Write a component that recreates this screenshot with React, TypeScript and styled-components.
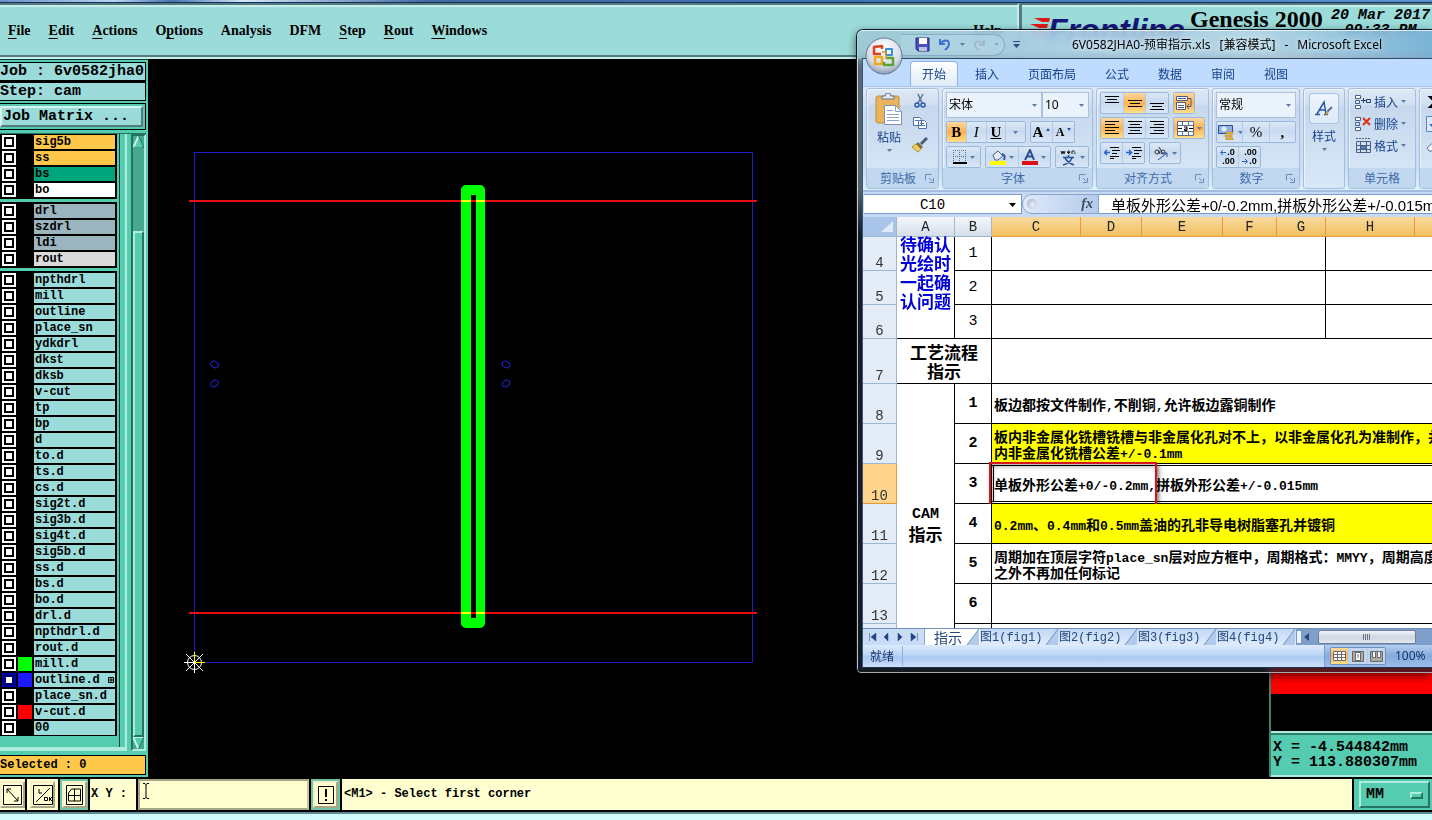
import React from "react";
import styled, { createGlobalStyle, css } from "styled-components";

const mono = '"Liberation Mono", "Noto Sans CJK SC", monospace';
const serif = '"Liberation Serif", "Noto Sans CJK SC", serif';
const ui = '"Noto Sans CJK SC", "Noto Sans", sans-serif';

const teal = "#9bdbda";
const green = "#55cbb0";
const cream = "#ffffcf";

const Global = createGlobalStyle`
  *, *::before, *::after { box-sizing: border-box; }
  html, body { margin: 0; padding: 0; background: #000; }
  body { overflow: hidden; }
  button, input, select { margin: 0; padding: 0; border: 0; border-radius: 0; font: inherit; color: inherit; background: none; outline: none; }
  button { cursor: pointer; }
  svg { display: block; flex: none; }
`;

const Page = styled.div`
  position: relative;
  display: flex;
  flex-direction: column;
  min-height: 100vh;
  overflow: hidden;
  background: #000;
  color: #000;
  font-family: ${mono};
`;

/* ---------- CAM header ---------- */
const DesktopStrip = styled.div`
  height: 3px;
  flex: none;
  background: linear-gradient(90deg, #6d8fc4, #b9d4ef 8%, #4a74ad 12%, #d5e6f7 17%, #44689f 30%, #3f73b3 60%, #5c92cc);
  border-bottom: 1px solid #12305c;
`;
const Header = styled.header`
  display: flex;
  flex: none;
  height: 56px;
  background: ${teal};
`;
const HeaderPanel = styled.div`
  display: flex;
  border-top: 2px solid #547c7e;
  border-bottom: 2px solid #c9efec;
  box-shadow: inset 0 2px #c9efec, inset 0 -2px #547c7e;
`;
const MenuPanel = styled(HeaderPanel)`
  flex: 1;
  align-items: center;
  padding: 0 15px 0 8px;
  border-right: 2px solid #c9efec;
`;
const Menu = styled.nav`
  display: flex;
  flex: 1;
  gap: 18px;
  font: bold 14px/18px ${serif};
`;
const MenuButton = styled.button`
  height: 18px;
  u { text-underline-offset: 3px; }
  &:last-child { margin-left: auto; }
`;
const BrandPanel = styled(HeaderPanel)`
  flex: none;
  width: 413px;
  padding: 0 2px 0 8px;
  border-left: 3px solid #547c7e;
  overflow: hidden;
`;
const Brand = styled.div`
  display: flex;
  width: 160px;
  margin-top: 7px;
  color: #16167c;
  font: italic bold 32px/36px "Liberation Sans", sans-serif;
  svg { margin: 6px -2px 0 0; }
`;
const Product = styled.div`
  width: 141px;
  font: bold 24px/28px ${serif};
  white-space: nowrap;
`;
const Clock = styled.time`
  font: italic bold 15px/15px ${mono};
  white-space: pre;
  text-align: center;
  padding-top: 3px;
`;

/* ---------- Main area ---------- */
const Main = styled.main`
  display: flex;
  flex: 1;
  min-height: 718px;
`;
const Sidebar = styled.aside`
  display: flex;
  flex-direction: column;
  flex: none;
  width: 148px;
  padding: 2px 2px 2px 0;
  background: ${green};
  border-top: 1px solid #0b3b31;
`;
const InfoLine = styled.div<{ $last?: boolean }>`
  height: ${(p) => (p.$last ? 19 : 20)}px;
  background: ${teal};
  border: 1px solid #000;
  border-left: 0;
  border-bottom-width: ${(p) => (p.$last ? 1 : 2)}px;
  font: bold 15px/18px ${mono};
  white-space: pre;
  overflow: hidden;
`;
const MatrixFrame = styled.div`
  margin: 2px 0 3px;
  padding: 2px 2px 2px 0;
  border: 1px solid #000;
  border-left: 0;
`;
const MatrixButton = styled.button`
  display: block;
  width: 100%;
  height: 21px;
  padding-left: 1px;
  border: 2px solid;
  border-color: #d6f5f3 #547c7e #547c7e #d6f5f3;
  background: ${teal};
  font: bold 15px/17px ${mono};
  text-align: left;
  white-space: pre;
`;
const LayerArea = styled.div`
  display: flex;
  flex: 1;
  border-top: 1px solid #23735f;
`;
const LayerPane = styled.div`
  width: 127px;
  padding: 0 7px 10px 0;
  border-right: 2px solid #aeeddc;
  border-bottom: 4px solid #aeeddc;
  background: linear-gradient(90deg, ${green} 119px, #123f35 119px, #123f35 120px, ${green} 120px);
`;
const LayerGroup = styled.fieldset`
  width: 117px;
  min-width: 0;
  margin: 0;
  padding: 0;
  border: 0;
  background: #000;
  & + & {
    margin-top: 3px;
    border-top: 1px solid #000;
  }
  &:not(:last-child) { border-bottom: 1px solid #000; }
`;
const LayerRow = styled.label`
  display: flex;
  align-items: center;
  gap: 2px;
  height: 16px;
  padding-left: 2px;
`;
const LayerBox = styled.input`
  appearance: none;
  flex: none;
  width: 14px;
  height: 14px;
  background: #fff;
  box-shadow: inset 0 0 0 2px #fff, inset 0 0 0 4px #000;
  &:checked { box-shadow: inset 0 0 0 2px #0000a8, inset 0 0 0 4px #000070; }
`;
const Swatch = styled.span<{ $color?: string }>`
  flex: none;
  width: 14px;
  height: 14px;
  background: ${(p) => p.$color || "#000"};
`;
const LayerName = styled.span<{ $bg: string }>`
  display: flex;
  align-items: center;
  justify-content: space-between;
  width: 81px;
  height: 14px;
  padding: 0 1px;
  background: ${(p) => p.$bg};
  font: bold 12px/14px ${mono};
`;
const ScrollTrack = styled.div`
  display: flex;
  flex-direction: column;
  width: 15px;
  margin: 0 0 0 4px;
  background: #45a98f;
  border: 2px solid;
  border-color: #23735f #aeeddc #aeeddc #23735f;
`;
const ScrollSpace = styled.div`
  height: 83px;
`;
const ScrollThumb = styled.div`
  flex: 1;
  background: ${green};
  border: 2px solid;
  border-color: #aeeddc #23735f #23735f #aeeddc;
`;
const Selected = styled.div`
  height: 20px;
  margin-top: 4px;
  background: #ffc84a;
  border: 1px solid #000;
  border-left: 0;
  font: bold 12px/18px ${mono};
`;
const Canvas = styled.div`
  flex: 1;
  min-width: 0;
  svg { width: 100%; height: 100%; }
`;
const ReadoutColumn = styled.div`
  display: flex;
  flex-direction: column;
  flex: none;
  width: 163px;
  border-left: 2px solid #3d7f70;
`;
const RedFill = styled.div`
  flex: 1;
  background: #f00;
`;
const BlackFill = styled.div`
  height: 37px;
  background: #000;
`;
const Coordinates = styled.div`
  height: 46px;
  padding: 7px 0 0 2px;
  background: ${green};
  border-top: 2px solid #aeeddc;
  border-bottom: 2px solid #aeeddc;
  box-shadow: inset 0 2px #2f7c69;
  font: bold 15px/15px ${mono};
  white-space: pre;
`;

/* ---------- Bottom bar ---------- */
const CommandBar = styled.footer`
  display: flex;
  flex: none;
  gap: 2px;
  height: 35px;
  padding: 2px 0;
  background: #000;
`;
const IconCell = styled.div<{ $active?: boolean; $width: number }>`
  display: flex;
  align-items: center;
  justify-content: center;
  flex: none;
  width: ${(p) => p.$width}px;
  background: ${(p) => (p.$active ? "#6fc3a8" : cream)};
`;
const IconButton = styled.button`
  display: flex;
  align-items: center;
  justify-content: center;
  width: 25px;
  height: 27px;
  background: ${cream};
  border: 2px solid;
  border-color: #f4f0c8 #a8a686 #a8a686 #f4f0c8;
`;
const XYLabel = styled.label`
  flex: none;
  width: 46px;
  padding-left: 1px;
  background: ${cream};
  font: bold 12px/31px ${mono};
  white-space: pre;
`;
const XYWrap = styled.div`
  position: relative;
  flex: none;
  width: 171px;
  svg { position: absolute; left: 5px; top: 4px; }
`;
const XYInput = styled.input`
  display: block;
  width: 171px;
  height: 31px;
  padding: 0 14px;
  background: ${cream};
  border: 2px solid;
  border-color: #a8a686 #c9c7a2 #a8a686 #a8a686;
  font: bold 12px/24px ${mono};
`;
const Message = styled.div`
  flex: 1;
  padding-left: 2px;
  background: ${cream};
  font: bold 12px/31px ${mono};
  white-space: nowrap;
`;
const UnitPanel = styled.div`
  position: relative;
  flex: none;
  width: 78px;
  padding: 2px 2px 2px 5px;
  background: ${green};
`;
const UnitSelect = styled.select`
  appearance: none;
  width: 100%;
  height: 27px;
  padding-left: 5px;
  border: 2px solid;
  border-color: #aeeddc #23735f #23735f #aeeddc;
  font: bold 15px/20px ${mono};
`;
const UnitKnob = styled.span`
  position: absolute;
  right: 9px;
  top: 13px;
  width: 13px;
  height: 7px;
  border: 2px solid;
  border-color: #aeeddc #23735f #23735f #aeeddc;
  pointer-events: none;
`;
const BottomStrip = styled.div`
  flex: none;
  height: 8px;
  background: #cffbfb;
  border-top: 2px solid #5f8a94;
`;

/* ---------- Spreadsheet window ---------- */
const Win = styled.section`
  position: absolute;
  left: 856px;
  right: 0;
  top: 29px;
  padding: 0 0 4px 5px;
  border: 1px solid #0d1a26;
  border-right: 0;
  border-bottom-color: #a9a9ad;
  border-radius: 7px 0 0 5px;
  background: linear-gradient(rgba(190, 205, 220, 0.5), rgba(190, 205, 220, 0.45) 25%, rgba(30, 34, 44, 0.75) 32%);
  box-shadow: inset 1px 1px rgba(235, 246, 255, 0.75), 0 3px 8px rgba(0, 0, 0, 0.6);
  backdrop-filter: blur(5px);
  font-family: ${ui};
  font-size: 12px;
`;
const TitleBar = styled.div`
  display: flex;
  align-items: center;
  height: 28px;
  margin-left: -5px;
  padding-left: 44px;
  border-top: 1px solid rgba(240, 250, 255, 0.8);
  border-top-left-radius: 6px;
  background: linear-gradient(90deg, rgba(150, 198, 208, 0.7), rgba(166, 204, 230, 0.7) 30%, rgba(180, 212, 232, 0.65) 70%, rgba(110, 172, 212, 0.8));
`;
const QuickAccess = styled.div`
  display: flex;
  align-items: center;
  gap: 8px;
  width: 104px;
  height: 22px;
  padding-left: 14px;
  border: 1px solid rgba(110, 150, 185, 0.6);
  border-left: 0;
  border-radius: 0 12px 12px 0;
  background: rgba(200, 226, 240, 0.3);
`;
const TinyButton = styled.button`
  display: flex;
  align-items: center;
  justify-content: center;
  min-width: 5px;
`;
const Title = styled.h1`
  display: flex;
  gap: 9px;
  margin: 0 0 0 52px;
  font: 12px/22px "Noto Sans", "Noto Sans CJK SC", sans-serif;
  white-space: pre;
  text-shadow: 0 0 6px #fff;
`;
const Orb = styled.button`
  position: absolute;
  left: 8px;
  top: 7px;
  width: 38px;
  height: 38px;
`;
const Client = styled.div`
  border-left: 1px solid #34577f;
  border-top: 1px solid #2c4a66;
  border-bottom: 1px solid #1d3450;
  background: #c5dafa;
  overflow: hidden;
`;
const RibbonTabs = styled.div`
  display: flex;
  gap: 5px;
  height: 27px;
  padding: 2px 0 0 47px;
  background: #bfdbff;
`;
const RibbonTab = styled.button<{ $on?: boolean }>`
  height: 25px;
  padding: 0 12px;
  color: #15428b;
  font: 12px/22px ${ui};
  white-space: nowrap;
  ${(p) =>
    p.$on &&
    css`
      background: linear-gradient(#fff, #e0ebf8);
      border: 1px solid #8db2e3;
      border-bottom: 0;
      border-radius: 4px 4px 0 0;
      padding: 0 11px;
    `}
`;
const Ribbon = styled.div`
  display: flex;
  gap: 3px;
  height: 106px;
  padding: 1px 0 1px 3px;
  background: linear-gradient(#dce8f6, #cbdcf0 25%, #c9ddf4 80%, #e1f0ff);
  border-top: 1px solid #a5c5ee;
  border-bottom: 2px solid #a3bde0;
`;
const Group = styled.div<{ $width: number }>`
  display: flex;
  flex-direction: column;
  flex: none;
  width: ${(p) => p.$width}px;
  border: 1px solid #a3bfdd;
  border-radius: 3px;
  background: linear-gradient(#dee8f5, #d1dff0 16%, #c7d8ed 17%, #d9e8f8);
  box-shadow: inset 1px 1px rgba(255, 255, 255, 0.6);
  overflow: hidden;
`;
const GroupBody = styled.div`
  display: flex;
  flex-direction: column;
  flex: 1;
  gap: 3px;
  padding: 3px 3px 0;
`;
const GroupLabel = styled.div`
  display: flex;
  align-items: center;
  justify-content: center;
  flex: none;
  height: 20px;
  padding: 0 4px;
  background: #c2d8f0;
  color: #3e6aaa;
  font: 12px/18px ${ui};
  white-space: nowrap;
  span { flex: 1; text-align: center; }
`;
const Row = styled.div<{ $gap?: number }>`
  display: flex;
  gap: ${(p) => p.$gap ?? 4}px;
`;
const ToolBox = styled.div<{ $width: number }>`
  display: flex;
  flex: none;
  width: ${(p) => p.$width}px;
  height: 22px;
  border: 1px solid #9ab8dc;
  border-radius: 2px;
  background: linear-gradient(#dce8f6, #c8daf0 45%, #d8e6f6);
`;
const Tool = styled.button<{ $on?: boolean }>`
  display: flex;
  align-items: center;
  justify-content: center;
  flex: 1;
  gap: 3px;
  min-width: 0;
  font: 15px/20px ${serif};
  small { font-size: 12px; }
  & + & { border-left: 1px solid #b4cae6; }
  ${(p) => p.$on && css`background: linear-gradient(#fdd9a0, #fdb04f 50%, #ffe08a);`}
`;
const Combo = styled.div<{ $width: number }>`
  position: relative;
  flex: none;
  width: ${(p) => p.$width}px;
  height: 26px;
  border: 1px solid #abc1de;
  background: #eaf2fb;
  svg { position: absolute; right: 4px; top: 11px; pointer-events: none; }
`;
const ComboSelect = styled.select`
  appearance: none;
  width: 100%;
  height: 24px;
  padding-left: 2px;
  font: 12px/22px "Noto Sans", "Noto Sans CJK SC", sans-serif;
`;
const ClipboardBody = styled.div`
  display: flex;
  flex: 1;
  padding: 4px 8px 0;
  gap: 9px;
`;
const BigButton = styled.button`
  display: flex;
  flex-direction: column;
  align-items: center;
  color: #15428b;
  font: 12px/16px ${ui};
  white-space: nowrap;
  gap: 4px;
`;
const SmallColumn = styled.div`
  display: flex;
  flex-direction: column;
  gap: 6px;
`;
const StyleBody = styled.div`
  display: flex;
  flex-direction: column;
  align-items: center;
  padding-top: 4px;
`;
const StyleTile = styled.span`
  display: flex;
  align-items: center;
  justify-content: center;
  width: 30px;
  height: 31px;
  border: 1px solid #a9c3e3;
  border-radius: 3px;
  background: linear-gradient(#eef5fd, #dce9f8);
`;
const CellsButton = styled.button`
  display: flex;
  align-items: center;
  gap: 3px;
  height: 19px;
  padding-left: 3px;
  color: #15428b;
  font: 12px/18px ${ui};
  white-space: nowrap;
`;

const FormulaBar = styled.div`
  display: flex;
  height: 25px;
  padding: 2px 0 1px 1px;
  background: #c8daf2;
`;
const NameBox = styled.div`
  position: relative;
  flex: none;
  width: 158px;
  height: 20px;
  background: #fff;
  border: 1px solid #7a9cc8;
  border-left: 0;
  svg { position: absolute; right: 5px; top: 8px; }
`;
const NameInput = styled.input`
  width: 137px;
  height: 18px;
  text-align: center;
  font: 14px/18px ${mono};
`;
const FxPill = styled.div`
  display: flex;
  align-items: center;
  justify-content: space-between;
  flex: none;
  width: 77px;
  height: 20px;
  padding: 0 5px 0 4px;
  border: 1px solid #86a5cf;
  border-radius: 10px 0 0 10px;
  background: linear-gradient(90deg, #dfeafa, #b4cbec);
  font: italic bold 14px/18px ${serif};
  color: #404c60;
  i { width: 10px; height: 10px; border-radius: 5px; background: radial-gradient(circle at 60% 60%, #eef3fa, #98aac6); }
`;
const FormulaInput = styled.input`
  flex: 1;
  min-width: 0;
  height: 20px;
  padding-left: 12px;
  background: #fff;
  border-top: 1px solid #7a9cc8;
  border-bottom: 1px solid #7a9cc8;
  font: 15px/18px "Liberation Sans", "Noto Sans CJK SC", sans-serif;
`;

const SheetClip = styled.div`
  height: 411px;
  overflow: hidden;
  background: #fff;
`;
const Sheet = styled.table`
  width: 616px;
  table-layout: fixed;
  border-collapse: separate;
  border-spacing: 0;
  background: #fff;
  td, th { padding: 0; }
`;
const ColHead = styled.th<{ $on?: boolean }>`
  height: 20px;
  border-right: 1px solid ${(p) => (p.$on ? "#e8973d" : "#9eb6ce")};
  border-bottom: 1px solid ${(p) => (p.$on ? "#e8973d" : "#9eb6ce")};
  background: ${(p) => (p.$on ? "linear-gradient(#f9d99f, #f1c15f)" : "linear-gradient(#f4f8fc, #d4ddea)")};
  font: 14px/18px ${mono};
  color: #222;
`;
const Corner = styled.th`
  border-right: 1px solid #9eb6ce;
  border-bottom: 1px solid #9eb6ce;
  background: #a9c4e9;
  svg { margin-left: 18px; }
`;
const RowHead = styled.th<{ $on?: boolean; $h: number }>`
  height: ${(p) => p.$h}px;
  border-right: 1px solid ${(p) => (p.$on ? "#e8973d" : "#9eb6ce")};
  border-bottom: 1px solid ${(p) => (p.$on ? "#e8973d" : "#9eb6ce")};
  background: ${(p) => (p.$on ? "#ffd58d" : "#e4ecf7")};
  vertical-align: bottom;
  font: 14px/14px ${mono};
  color: #333;
`;
const Cell = styled.td<{ $fill?: string }>`
  position: relative;
  border-right: 1px solid #000;
  border-bottom: 1px solid #000;
  background: ${(p) => p.$fill || "#fff"};
`;
const IndexCell = styled(Cell)<{ $strong?: boolean }>`
  text-align: center;
  font: ${(p) => (p.$strong ? "bold" : "normal")} 15px/18px ${mono};
`;
const HeadingCell = styled(Cell)<{ $color?: string; $top?: boolean }>`
  text-align: center;
  vertical-align: ${(p) => (p.$top ? "top" : "middle")};
  color: ${(p) => p.$color || "#000"};
  font: bold 17px/19px ${ui};
  white-space: nowrap;
`;
const HeadingLines = styled.div<{ $lift?: boolean }>`
  margin-top: ${(p) => (p.$lift ? -3 : 0)}px;
`;
const NoteCell = styled(Cell)<{ $active?: boolean }>`
  padding-left: 2px !important;
  font: bold 14px/16px ${ui};
  white-space: nowrap;
  ${(p) => p.$active && css`box-shadow: inset 0 1px #fff, inset 0 2px #000, inset 0 -1px #fff, inset 0 -2px #000, inset 1px 0 #fff, inset 2px 0 #000;`}
`;
const NoteLines = styled.div`
  width: 500px;
  overflow: visible;
`;
const NoteLine = styled.div`
  height: 16px;
`;
const Latin = styled.span<{ $size?: number }>`
  font-family: ${mono};
  font-size: ${(p) => p.$size || 13}px;
`;
const RedMark = styled.span`
  position: absolute;
  left: -3px;
  top: -2px;
  width: 168px;
  height: 44px;
  border: 2px solid #d8141c;
  box-shadow: 2px 3px 4px rgba(0, 0, 0, 0.5), inset 2px 3px 4px rgba(0, 0, 0, 0.3);
`;

const SheetTabs = styled.div`
  display: flex;
  height: 17px;
  background: #7f9fcb;
  border-top: 1px solid #6f8fbd;
`;
const NavButtons = styled.div`
  display: flex;
  align-items: center;
  flex: none;
  width: 62px;
  padding: 0 5px;
  justify-content: space-between;
  background: #c9dcf5;
  border-right: 1px solid #8aa9d6;
`;
const SheetTab = styled.button<{ $on?: boolean }>`
  display: flex;
  align-items: center;
  justify-content: space-between;
  flex: none;
  width: ${(p) => (p.$on ? 55 : 79)}px;
  height: 16px;
  padding-left: ${(p) => (p.$on ? 9 : 0)}px;
  background: ${(p) => (p.$on ? "#fff" : "linear-gradient(#c2d8f4, #dfebfb)")};
  color: #23487e;
  font: ${(p) => (p.$on ? 14 : 12)}px/15px ${ui};
  white-space: nowrap;
  overflow: hidden;
`;
const Splitter = styled.div`
  flex: none;
  width: 6px;
  margin: 1px 0;
  background: #eef5ff;
  border: 1px solid #7a98c4;
`;
const HScroll = styled.div`
  display: flex;
  align-items: center;
  flex: 1;
  gap: 9px;
  padding-left: 2px;
  background: #7f9fcb;
`;
const HThumb = styled.div`
  display: flex;
  align-items: center;
  justify-content: center;
  width: 98px;
  height: 14px;
  border: 1px solid #6d7f99;
  border-radius: 2px;
  background: linear-gradient(#f2f5f9, #cfd6e1 50%, #e4e8ef);
`;
const StatusBar = styled.div`
  display: flex;
  align-items: center;
  height: 22px;
  background: linear-gradient(#dcebfd, #bdd6f7 45%, #a9c8f2 55%, #cfe1f9);
  color: #15326b;
  font: 12px/20px ${ui};
`;
const Ready = styled.div`
  flex: 1;
  padding-left: 7px;
  span { display: inline-block; width: 33px; border-right: 1px solid #8fb0dd; }
`;
const ViewPanel = styled.div`
  display: flex;
  align-items: center;
  gap: 9px;
  width: 108px;
  height: 22px;
  padding-left: 5px;
  border-left: 1px solid #7c9fd0;
  background: linear-gradient(#b5cdf0, #86abdc 50%, #9dbde8);
  font: 12px/20px "Noto Sans", sans-serif;
`;
const ViewButtons = styled.div`
  display: flex;
  width: 56px;
  height: 18px;
  border: 1px solid #6e8fc0;
  border-radius: 2px;
  background: #c3d6f0;
`;

/* ---------- small drawings ---------- */
const Caret = ({ color = "#5b7ba8" }: { color?: string }) => (
  <svg width="5" height="3"><path d="M0 0h5L2.500 3z" fill={color} /></svg>
);
const Launcher = () => (
  <svg width="9" height="9" fill="none" stroke="#6d8cb8"><path d="M.5 6.500v-6h6M4 4l3 3M8.500 4v4.500H4" /></svg>
);
const Lines = ({ widths, top = 1, step = 3, align = "left" }: { widths: number[]; top?: number; step?: number; align?: string }) => (
  <svg width="14" height="14" stroke="#000">
    {widths.map((w, i) => {
      const x = align === "center" ? (14 - w) / 2 : align === "right" ? 14 - w : 0;
      return <path key={i} d={`M${x} ${top + i * step + 0.5}h${w}`} />;
    })}
  </svg>
);
const IndentIcon = ({ right }: { right?: boolean }) => (
  <svg width="16" height="14" fill="none" stroke="#000">
    <path d="M6 1.500h9M8 4.500h8M8 7.500h5M6 10.500h9M6 12.500h4" />
    <path d={right ? "M0 6.500h5M3 4l2.500 2.500L3 9" : "M6 6.500H1M3 4L.5 6.500 3 9"} stroke="#2a62c4" strokeWidth="1.500" />
  </svg>
);
const QatMore = styled.svg`
  margin-left: 8px;
`;
const Slash = () => (
  <svg width="14" height="16" fill="none"><path d="M1 16L13 0v16z" fill="#b2cbed" /><path d="M1 16L13 0" stroke="#6b8cbc" /></svg>
);

const Mixed = ({ text }: { text: string }) => (
  <>
    {text.split(/([\x20-\x7e]+)/).map((part, i) => (i % 2 ? <Latin key={i}>{part}</Latin> : part))}
  </>
);

/* ---------- data ---------- */
const menus: [string, number][] = [
  ["File", 0], ["Edit", 0], ["Actions", 0], ["Options", 1], ["Analysis", -1],
  ["DFM", -1], ["Step", 0], ["Rout", 0], ["Windows", 0], ["Help", 0],
];
type Layer = { name: string; bg?: string; swatch?: string; on?: boolean };
const names = (s: string): Layer[] => s.split(" ").map((name) => ({ name }));
const groups: Layer[][] = [
  [
    { name: "sig5b", bg: "#ffc84a" },
    { name: "ss", bg: "#ffc84a" },
    { name: "bs", bg: "#00a57c" },
    { name: "bo", bg: "#fff" },
  ],
  [
    { name: "drl", bg: "#9bb4be" },
    { name: "szdrl", bg: "#9bb4be" },
    { name: "ldi", bg: "#9bb4be" },
    { name: "rout", bg: "#dadada" },
  ],
  [
    ...names("npthdrl mill outline place_sn ydkdrl dkst dksb v-cut tp bp d to.d ts.d cs.d sig2t.d sig3b.d sig4t.d sig5b.d ss.d bs.d bo.d drl.d npthdrl.d rout.d"),
    { name: "mill.d", swatch: "#0f0" },
    { name: "outline.d", swatch: "#1a1aff", on: true },
    { name: "place_sn.d" },
    { name: "v-cut.d", swatch: "#f00" },
    { name: "00" },
  ],
];
const columns: [string, number][] = [
  ["A", 58], ["B", 37], ["C", 89], ["D", 61], ["E", 81], ["F", 54], ["G", 49], ["H", 89], ["I", 64],
];
const notes: { row: number; index: string; lines: string[]; fill?: string; active?: boolean }[] = [
  { row: 8, index: "1", lines: ["板边都按文件制作,不削铜,允许板边露铜制作"] },
  { row: 9, index: "2", lines: ["板内非金属化铣槽铣槽与非金属化孔对不上，以非金属化孔为准制作，并", "内非金属化铣槽公差+/-0.1mm"], fill: "#ff0" },
  { row: 10, index: "3", lines: ["单板外形公差+0/-0.2mm,拼板外形公差+/-0.015mm"], active: true },
  { row: 11, index: "4", lines: ["0.2mm、0.4mm和0.5mm盖油的孔非导电树脂塞孔并镀铜"], fill: "#ff0" },
  { row: 12, index: "5", lines: ["周期加在顶层字符place_sn层对应方框中，周期格式：MMYY，周期高度", "之外不再加任何标记"] },
  { row: 13, index: "6", lines: [] },
];

/* ---------- parts ---------- */
function CamHeader() {
  return (
    <Header>
      <MenuPanel>
        <Menu>
          {menus.map(([label, at]) => (
            <MenuButton key={label}>
              {at < 0 ? label : <>{label.slice(0, at)}<u>{label[at]}</u>{label.slice(at + 1)}</>}
            </MenuButton>
          ))}
        </Menu>
      </MenuPanel>
      <BrandPanel>
        <Brand>
          <svg width="20" height="26" fill="#e01818"><path d="M4 0h16l-1 4H12zM0 6h18l-1 4H9zM-2 12h18l-1 4H6z" /></svg>
          Frontline
        </Brand>
        <Product>Genesis 2000</Product>
        <Clock>{"20 Mar 2017\n09:33 PM"}</Clock>
      </BrandPanel>
    </Header>
  );
}

function LayerSidebar() {
  return (
    <Sidebar>
      <InfoLine>Job : 6v0582jha0</InfoLine>
      <InfoLine $last>Step: cam</InfoLine>
      <MatrixFrame><MatrixButton>Job Matrix ...</MatrixButton></MatrixFrame>
      <LayerArea>
        <LayerPane>
          {groups.map((g, i) => (
            <LayerGroup key={i}>
              {g.map((l) => (
                <LayerRow key={l.name}>
                  <LayerBox type="checkbox" defaultChecked={l.on} />
                  <Swatch $color={l.swatch} />
                  <LayerName $bg={l.bg || teal}>
                    {l.name}
                    {l.on && <svg width="6" height="6" fill="none" stroke="#000"><path d="M.5.5h5v5h-5zM3 0v6M0 3h6" /></svg>}
                  </LayerName>
                </LayerRow>
              ))}
            </LayerGroup>
          ))}
        </LayerPane>
        <ScrollTrack>
          <svg width="11" height="12"><path d="M5.500 0L0 12h11z" fill={green} /><path d="M5.500 0L0 12" stroke="#c4f5e8" strokeWidth="2" /><path d="M5.500 0L11 12H0" fill="none" stroke="#23735f" /></svg>
          <ScrollSpace />
          <ScrollThumb />
          <svg width="11" height="12"><path d="M5.500 12L0 0h11z" fill={green} /><path d="M5.500 12L0 0h11" fill="none" stroke="#c4f5e8" strokeWidth="2" /><path d="M5.500 12L11 0" stroke="#23735f" /></svg>
        </ScrollTrack>
      </LayerArea>
      <Selected>Selected : 0</Selected>
    </Sidebar>
  );
}

function Drawing() {
  return (
    <Canvas>
      <svg fill="none">
        <path d="M46.500 93.500h558v510h-558z" stroke="#1b1bc8" />
        <path d="M318 131v433M318 131h14M318 564h14" stroke="#0f0" strokeWidth="10" strokeLinecap="round" />
        <path d="M332.500 131v433" stroke="#0f0" strokeWidth="9" />
        <path d="M41 142h568M41 554h568" stroke="#e80f14" strokeWidth="2" />
        <path d="M313 142h10M328 142h9M313 554h10M328 554h9" stroke="#ff0" strokeWidth="2" />
        <g stroke="#2323d6">
          <ellipse cx="66.500" cy="305.500" rx="4" ry="3" transform="rotate(30 66.500 305.500)" />
          <ellipse cx="66.500" cy="324.500" rx="4" ry="3" transform="rotate(-35 66.500 324.500)" />
          <ellipse cx="358" cy="305.500" rx="4" ry="3" transform="rotate(30 358 305.500)" />
          <ellipse cx="358" cy="324.500" rx="4" ry="3" transform="rotate(-35 358 324.500)" />
        </g>
        <circle cx="46.500" cy="603.500" r="7" stroke="#fff" />
        <path d="M36 603.500h10M46.500 604v10M38 595l17 17M55 595l-17 17" stroke="#fff" />
        <path d="M46.500 593v10.500H57" stroke="#ff0" />
      </svg>
    </Canvas>
  );
}

const Tiny = styled.span`
  display: flex;
  flex-direction: column;
  align-items: flex-end;
  font: bold 9px/9px "Liberation Sans", sans-serif;
`;
const TinyLine = styled.span`
  display: flex;
  align-items: center;
  gap: 1px;
`;
function DecimalIcon({ more }: { more?: boolean }) {
  const arrow = (
    <svg width="6" height="5" fill="none" stroke="#2a62c4"><path d={more ? "M6 2.500H1M3 0L.5 2.500 3 5" : "M0 2.500h5M3 0l2.500 2.500L3 5"} /></svg>
  );
  return (
    <Tiny>
      <TinyLine>{more && arrow}{more ? ".0" : ".00"}</TinyLine>
      <TinyLine>{!more && arrow}{more ? ".00" : ".0"}</TinyLine>
    </Tiny>
  );
}
function CellIcon({ kind }: { kind: "insert" | "delete" | "format" }) {
  return (
    <svg width="16" height="16" fill="none" stroke="#4a5f86">
      {kind === "format" ? (
        <><path d="M1.500 3.500h14v11h-14zM1 7.500h15M1 11.500h15M5.500 3v12M11.500 3v12" /><path d="M1 .5h14" strokeDasharray="2 1" /><path d="M6 8h5v3H6z" fill="#5b86c8" /></>
      ) : (
        <><path d="M.5 1.500h5v3h-5zM.5 11.500h5v3h-5z" fill="#fff" /><path d="M.5 6.500h4v3h-4z" fill="#dce9f8" />
          {kind === "insert"
            ? <path d="M6 6.500h5M8.500 4v5M11.500 5.500h4v3h-4z" stroke="#24406f" />
            : <path d="M8 2l7 7M15 2L8 9" stroke="#e0301c" strokeWidth="2" />}</>
      )}
    </svg>
  );
}

function ExcelRibbon() {
  return (
    <Ribbon>
      <Group $width={73}>
        <ClipboardBody>
          <BigButton>
            <svg width="28" height="32">
              <rect x="1" y="3" width="23" height="27" rx="2" fill="#eab45c" stroke="#c48a35" />
              <path d="M7 6V3h3a3 3 0 016 0h3v3z" fill="#dfe5ee" stroke="#66758c" />
              <path d="M9.500 12.500h11l6 6v13h-17z" fill="#fff" stroke="#7f92b3" />
              <path d="M20.500 12.500v6h6M12 17.500h6M12 21.500h12M12 24.500h12M12 27.500h12" fill="none" stroke="#8ca3c8" />
            </svg>
            粘贴
            <Caret />
          </BigButton>
          <SmallColumn>
            <TinyButton aria-label="剪切">
              <svg width="16" height="16" fill="none" strokeWidth="1.500"><path d="M6 1l4 9M11 1L6 10" stroke="#5b6f91" /><circle cx="5" cy="12" r="2" stroke="#2b57a8" /><circle cx="11" cy="12" r="2" stroke="#2b57a8" /></svg>
            </TinyButton>
            <TinyButton aria-label="复制">
              <svg width="16" height="16" fill="#fff" stroke="#4a6fb0"><path d="M1.500 2.500h6l2 2v6h-8zM6.500 5.500h6l2 2v6h-8z" /><path d="M8 8.500h4M8 10.500h5M3 5.500h3" /></svg>
            </TinyButton>
            <TinyButton aria-label="格式刷">
              <svg width="16" height="16"><path d="M15 1l-6 6" stroke="#4c5b77" strokeWidth="3" /><path d="M6 5l5 5-2 2-5-5z" fill="#7b6a4c" /><path d="M4 7l5 5-3 3-6-5z" fill="#f0cf5a" stroke="#b58f2b" /></svg>
            </TinyButton>
          </SmallColumn>
        </ClipboardBody>
        <GroupLabel><span>剪贴板</span><Launcher /></GroupLabel>
      </Group>

      <Group $width={151}>
        <GroupBody>
          <Row $gap={0}>
            <Combo $width={96}><ComboSelect aria-label="字体"><option>宋体</option></ComboSelect><Caret /></Combo>
            <Combo $width={47}><ComboSelect aria-label="字号"><option>10</option></ComboSelect><Caret /></Combo>
          </Row>
          <Row>
            <ToolBox $width={80}>
              <Tool $on><b>B</b></Tool>
              <Tool><i>I</i></Tool>
              <Tool><b><u>U</u></b></Tool>
              <Tool><Caret /></Tool>
            </ToolBox>
            <ToolBox $width={45}>
              <Tool><b>A</b><svg width="4" height="8"><path d="M0 3h4L2 0z" fill="#2b57a8" /></svg></Tool>
              <Tool><small><b>A</b></small><svg width="4" height="8"><path d="M0 0h4L2 3z" fill="#2b57a8" /></svg></Tool>
            </ToolBox>
          </Row>
          <Row>
            <ToolBox $width={35}>
              <Tool><svg width="14" height="14" fill="none" stroke="#5a6f92"><path d="M.5 0v13M6.500 0v13M12.500 0v13M0 .5h13M0 6.500h13" strokeDasharray="1 1" /><path d="M0 13h14" stroke="#000" strokeWidth="2" /></svg><Caret /></Tool>
            </ToolBox>
            <ToolBox $width={66}>
              <Tool><svg width="16" height="16"><path d="M3 6l5-4 5 5-5 4H5z" fill="#e8eef8" stroke="#4d5f80" /><path d="M12 5q4 1 2 6" fill="none" stroke="#2b57a8" strokeWidth="2" /><path d="M0 12h16v4H0z" fill="#ff0" /></svg><Caret /></Tool>
              <Tool><svg width="16" height="16"><path d="M3 11L8 1l4 10M5 7.500h6" fill="none" stroke="#2b4f96" strokeWidth="2" /><path d="M0 12h16v4H0z" fill="#e0101a" /></svg><Caret /></Tool>
            </ToolBox>
            <ToolBox $width={34}>
              <Tool><svg width="17" height="18" fill="none" stroke="#222"><path d="M1 3l1 3 1-3 1 3 1-3M7 4.500h3q0-2-2-1.500-1.500 2 1.500 3M12 6V3q3-1 3 3" /><path d="M8.500 7v2M3 9.500h11M5 10q3 5 9 7M12 10q-2 5-9 7" stroke="#2b4f96" strokeWidth="1.500" /></svg><Caret /></Tool>
            </ToolBox>
          </Row>
        </GroupBody>
        <GroupLabel><span>字体</span><Launcher /></GroupLabel>
      </Group>

      <Group $width={113}>
        <GroupBody>
          <Row>
            <ToolBox $width={69}>
              <Tool><Lines widths={[14, 10, 14]} top={0} align="center" /></Tool>
              <Tool $on><Lines widths={[14, 10, 14]} top={4} align="center" /></Tool>
              <Tool><Lines widths={[14, 10, 14]} top={7} align="center" /></Tool>
            </ToolBox>
            <ToolBox $width={22}>
              <Tool $on><svg width="18" height="16" fill="#fff" stroke="#4c5b77"><path d="M1.500 1.500h11v4h-11zM1.500 7.500h9v7h-9z" /><path d="M3 3.500h8M3 10.500h6M3 12.500h6M13 3.500h3v8h-4M14 9l-2 2.500 2 2.500" fill="none" /></svg></Tool>
            </ToolBox>
          </Row>
          <Row>
            <ToolBox $width={69}>
              <Tool $on><Lines widths={[14, 10, 14, 10, 14]} top={0} /></Tool>
              <Tool><Lines widths={[14, 10, 14, 10, 14]} top={0} align="center" /></Tool>
              <Tool><Lines widths={[14, 10, 14, 10, 14]} top={0} align="right" /></Tool>
            </ToolBox>
            <ToolBox $width={32}>
              <Tool $on><svg width="17" height="15" fill="#fff" stroke="#5a6f92"><path d="M.5.5h16v14H.5z" /><path d="M0 4.500h17M0 10.500h17M5.500 0v4M11.500 0v4M5.500 11v4M11.500 11v4" /><path d="M1 7.500h4M12 7.500h4M7 6h3v3.500H7.500V8H10" stroke="#000" fill="none" /></svg><Caret /></Tool>
            </ToolBox>
          </Row>
          <Row>
            <ToolBox $width={45}>
              <Tool><IndentIcon /></Tool>
              <Tool><IndentIcon right /></Tool>
            </ToolBox>
            <ToolBox $width={32}>
              <Tool><svg width="16" height="16" fill="none" stroke="#333"><circle cx="4" cy="7" r="2" /><path d="M5.500 5l1.500 4M6 2l4 7" /><circle cx="10" cy="7" r="2" /><path d="M5 15l9-7M14 8v4M14 8h-4" stroke="#2b4f96" /></svg><Caret /></Tool>
            </ToolBox>
          </Row>
        </GroupBody>
        <GroupLabel><span>对齐方式</span><Launcher /></GroupLabel>
      </Group>

      <Group $width={88}>
        <GroupBody>
          <Combo $width={80}><ComboSelect aria-label="数字格式"><option>常规</option></ComboSelect><Caret /></Combo>
          <ToolBox $width={80}>
            <Tool><svg width="18" height="16"><path d="M1.500 1.500h14v8h-14z" fill="#8fb0e0" stroke="#2b4f96" /><circle cx="7" cy="5" r="2.500" fill="#e6eefb" /><path d="M9 8h7v2H9zM8 11h7v2H8zM9 14h7v2H9z" fill="#f0b93c" stroke="#a87718" strokeWidth=".5" /></svg><Caret /></Tool>
            <Tool>%</Tool>
            <Tool><b>,</b></Tool>
          </ToolBox>
          <ToolBox $width={45}>
            <Tool><DecimalIcon more /></Tool>
            <Tool><DecimalIcon /></Tool>
          </ToolBox>
        </GroupBody>
        <GroupLabel><span>数字</span><Launcher /></GroupLabel>
      </Group>

      <Group $width={42}>
        <StyleBody>
          <BigButton>
            <StyleTile>
              <svg width="18" height="18" fill="none"><path d="M2 14L9 2l2 12M4 10h7M0 14.500h5M9 14.500h4" stroke="#2b57a8" strokeWidth="1.500" /><path d="M17 7l-5 5" stroke="#5b6f91" strokeWidth="2" /><path d="M12 11l2 2-4 3z" fill="#e0a030" /></svg>
            </StyleTile>
            样式
            <Caret />
          </BigButton>
        </StyleBody>
      </Group>

      <Group $width={68}>
        <GroupBody>
          <CellsButton><CellIcon kind="insert" />插入<Caret /></CellsButton>
          <CellsButton><CellIcon kind="delete" />删除<Caret /></CellsButton>
          <CellsButton><CellIcon kind="format" />格式<Caret /></CellsButton>
        </GroupBody>
        <GroupLabel><span>单元格</span></GroupLabel>
      </Group>

      <Group $width={120}>
        <GroupBody>
          <CellsButton aria-label="求和"><svg width="16" height="16" fill="none" stroke="#000" strokeWidth="2"><path d="M13 4V3H4l5 5-5 5h9v-2" /></svg></CellsButton>
          <CellsButton aria-label="填充"><svg width="16" height="16"><path d="M.5.5h15v15H.5z" fill="#dce9f8" stroke="#5b86c8" /><path d="M6 3h4v5h3l-5 5-5-5h3z" fill="#2b6ad0" /></svg></CellsButton>
          <CellsButton aria-label="清除"><svg width="18" height="14"><path d="M1 9l8-7h8l-7 10H3z" fill="#f4f6fa" stroke="#5a6f92" /></svg></CellsButton>
        </GroupBody>
        <GroupLabel />
      </Group>
    </Ribbon>
  );
}

const CamWord = styled.div`
  font: bold 15px/19px ${mono};
`;

function ExcelSheet() {
  return (
    <SheetClip>
      <Sheet>
        <colgroup>
          <col width="34" />
          {columns.map(([c, w]) => <col key={c} width={w} />)}
        </colgroup>
        <thead>
          <tr>
            <Corner><svg width="12" height="11"><path d="M12 0v11H0z" fill="#dfeafa" /></svg></Corner>
            {columns.map(([c], i) => <ColHead key={c} $on={i > 1}>{c}</ColHead>)}
          </tr>
        </thead>
        <tbody>
          <tr>
            <RowHead $h={34}>4</RowHead>
            <HeadingCell rowSpan={3} $color="#0000d8" $top>
              <HeadingLines $lift>待确认<br />光绘时<br />一起确<br />认问题</HeadingLines>
            </HeadingCell>
            <IndexCell>1</IndexCell>
            <Cell colSpan={5} />
            <Cell colSpan={2} />
          </tr>
          {[["5", "2"], ["6", "3"]].map(([row, n]) => (
            <tr key={row}>
              <RowHead $h={34}>{row}</RowHead>
              <IndexCell>{n}</IndexCell>
              <Cell colSpan={5} />
              <Cell colSpan={2} />
            </tr>
          ))}
          <tr>
            <RowHead $h={45}>7</RowHead>
            <HeadingCell colSpan={2}>工艺流程<br />指示</HeadingCell>
            <Cell colSpan={7} />
          </tr>
          {notes.map((n) => (
            <tr key={n.row}>
              <RowHead $h={40} $on={n.active}>{n.row}</RowHead>
              {n.row === 8 && (
                <HeadingCell rowSpan={7}>
                  <CamWord>CAM</CamWord>
                  指示
                </HeadingCell>
              )}
              <IndexCell $strong>{n.index}</IndexCell>
              <NoteCell colSpan={7} $fill={n.fill} $active={n.active}>
                <NoteLines>
                  {n.lines.map((l) => <NoteLine key={l}><Mixed text={l} /></NoteLine>)}
                </NoteLines>
                {n.active && <RedMark />}
              </NoteCell>
            </tr>
          ))}
          <tr>
            <RowHead $h={40} />
            <IndexCell />
            <Cell colSpan={7} />
          </tr>
        </tbody>
      </Sheet>
    </SheetClip>
  );
}

function ExcelWindow() {
  return (
    <Win>
      <TitleBar>
        <QuickAccess>
          <TinyButton aria-label="保存"><svg width="15" height="15"><path d="M1 1h13v13H3l-2-2z" fill="#4a4fc0" stroke="#23287c" /><path d="M4 1h8v6H4z" fill="#fff" /><path d="M4 10h8v4H4z" fill="#b9c2e0" /></svg></TinyButton>
          <TinyButton aria-label="撤消"><svg width="14" height="13" fill="none" stroke="#3f6fd0" strokeWidth="2"><path d="M2 1v5h5M2 6q4-5 8-3 3 4-3 9" /></svg></TinyButton>
          <Caret />
          <TinyButton aria-label="恢复"><svg width="13" height="12" fill="none" stroke="#a4b8cc" strokeWidth="2"><path d="M11 1v5H6M11 6Q7 1 3 3q-3 4 3 8" /></svg></TinyButton>
          <Caret color="#8fa6bf" />
        </QuickAccess>
        <TinyButton aria-label="自定义">
          <QatMore width="7" height="7"><path d="M0 .5h7" stroke="#2c4d7c" /><path d="M0 3h7L3.500 7z" fill="#2c4d7c" /></QatMore>
        </TinyButton>
        <Title><span>6V0582JHA0-预审指示.xls</span><span>[兼容模式]</span><span>-</span><span>Microsoft Excel</span></Title>
      </TitleBar>
      <Client>
        <RibbonTabs>
          {["开始", "插入", "页面布局", "公式", "数据", "审阅", "视图"].map((t, i) => (
            <RibbonTab key={t} $on={i === 0}>{t}</RibbonTab>
          ))}
        </RibbonTabs>
        <ExcelRibbon />
        <FormulaBar>
          <NameBox><NameInput aria-label="名称框" defaultValue="C10" /><svg width="7" height="4"><path d="M0 0h7L3.500 4z" /></svg></NameBox>
          <FxPill><i />fx</FxPill>
          <FormulaInput aria-label="编辑栏" defaultValue="单板外形公差+0/-0.2mm,拼板外形公差+/-0.015mm" />
        </FormulaBar>
        <ExcelSheet />
        <SheetTabs>
          <NavButtons>
            {["M1.500 0v8M8 0v8L3 4z", "M6 0v8L2 4z", "M2 0v8l4-4z", "M7.500 0v8M1 0v8l5-4z"].map((d) => (
              <TinyButton key={d} aria-label="工作表导航"><svg width="9" height="8" fill="#1f4585" stroke="#1f4585" strokeWidth=".5"><path d={d} /></svg></TinyButton>
            ))}
          </NavButtons>
          <SheetTab $on>指示<Slash /></SheetTab>
          {[1, 2, 3, 4].map((n) => (
            <SheetTab key={n}><span>图<Latin $size={12}>{`${n}(fig${n})`}</Latin></span><Slash /></SheetTab>
          ))}
          <Splitter />
          <HScroll>
            <svg width="5" height="8"><path d="M5 0v8L0 4z" fill="#24467f" /></svg>
            <HThumb><svg width="8" height="6" stroke="#6a7588"><path d="M.5 0v6M2.500 0v6M4.500 0v6M6.500 0v6" /></svg></HThumb>
          </HScroll>
        </SheetTabs>
        <StatusBar>
          <Ready><span>就绪</span></Ready>
          <ViewPanel>
            <ViewButtons>
              <Tool $on aria-label="普通"><svg width="13" height="10" fill="#fff" stroke="#6b6b6b"><path d="M.5.5h12v9H.5zM0 3.500h13M0 6.500h13M4.500 0v10M8.500 0v10" /></svg></Tool>
              <Tool aria-label="页面布局"><svg width="12" height="11" fill="#fff" stroke="#666"><path d="M.5.5h11v10H.5z" fill="#aaa" /><path d="M3.500 1.500h5v8h-5zM5 4h2M5 6h2" /></svg></Tool>
              <Tool aria-label="分页预览"><svg width="13" height="11" fill="#aaa" stroke="#666"><path d="M.5.5h12v10H.5z" /><path d="M2.500.5h3v6h-3zM7.500.5h3v6h-3z" fill="#fff" /></svg></Tool>
            </ViewButtons>
            100%
          </ViewPanel>
        </StatusBar>
      </Client>
      <Orb aria-label="Office">
        <svg width="38" height="38">
          <defs>
            <radialGradient id="orb" cx=".5" cy=".3" r=".7"><stop offset="0" stopColor="#fff" /><stop offset=".7" stopColor="#d5dbe6" /><stop offset="1" stopColor="#8d9bb3" /></radialGradient>
          </defs>
          <circle cx="19" cy="19" r="18" fill="url(#orb)" stroke="#66768f" />
          <g fill="none" strokeWidth="2.500" strokeLinejoin="round">
            <path d="M16 17H9v-7l8-1v3" stroke="#d8431c" />
            <path d="M21 12h6v6h-6z" stroke="#3d8fd8" strokeWidth="2" />
            <path d="M10 20h7v7h-7z" stroke="#efa91d" />
            <path d="M21 21h7v7h-9v-3" stroke="#5aa338" />
            <path d="M17 15h4v7" stroke="#e98b2a" strokeWidth="1.500" />
          </g>
        </svg>
      </Orb>
    </Win>
  );
}

export default function App() {
  return (
    <Page>
      <Global />
      <DesktopStrip />
      <CamHeader />
      <Main>
        <LayerSidebar />
        <Drawing />
        <ReadoutColumn>
          <RedFill />
          <BlackFill />
          <Coordinates>{"X = -4.544842mm\nY = 113.880307mm"}</Coordinates>
        </ReadoutColumn>
      </Main>
      <CommandBar>
        <IconCell $width={25}>
          <IconButton aria-label="Zoom area"><svg width="19" height="20" fill="none" stroke="#000"><path d="M.5.5h18v19H.5zM4 4l11 12M4 8V4h4M15 12v4h-4" /></svg></IconButton>
        </IconCell>
        <IconCell $width={31}>
          <IconButton aria-label="Snap"><svg width="20" height="20" fill="none" stroke="#000"><path d="M.5.5h19v19H.5zM3 17L17 3M6 4v4h3M11.500 12.500h3v3h-3zM16.500 12v4M19 12l-2 2 2 2" /></svg></IconButton>
        </IconCell>
        <IconCell $width={28} $active>
          <IconButton aria-label="Grid"><svg width="17" height="20" fill="none" stroke="#000"><path d="M.5.5h16v19H.5z" /><path d="M2.500 8l3-4h9v12h-12zM8.500 4v12M2 10.500h13" /></svg></IconButton>
        </IconCell>
        <XYLabel htmlFor="xy">X Y :</XYLabel>
        <XYWrap>
          <XYInput id="xy" />
          <svg width="6" height="16" fill="none" stroke="#000"><path d="M0 .5h2l1 1 1-1h2M3 1v14M0 15.500h2l1-1 1 1h2" /></svg>
        </XYWrap>
        <IconCell $width={29} $active>
          <IconButton aria-label="Alert"><svg width="16" height="18" fill="none" stroke="#000"><path d="M.5.5h15v17H.5z" /><path d="M8 3v8M8 13v2" strokeWidth="2" /></svg></IconButton>
        </IconCell>
        <Message>&lt;M1&gt; - Select first corner</Message>
        <UnitPanel>
          <UnitSelect aria-label="Units"><option>MM</option></UnitSelect>
          <UnitKnob />
        </UnitPanel>
      </CommandBar>
      <BottomStrip />
      <ExcelWindow />
    </Page>
  );
}
